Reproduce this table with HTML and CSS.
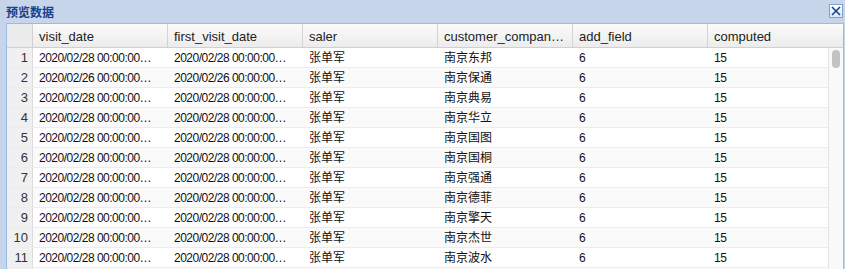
FILE: index.html
```html
<!DOCTYPE html>
<html lang="zh">
<head>
<meta charset="utf-8">
<title>预览数据</title>
<link rel="stylesheet" href="styles.css">
</head>
<body>
<div class="win">
  <div class="title">
    <span class="title-text">预览数据</span>
    <span class="close"><svg width="12" height="12" viewBox="0 0 12 12"><path d="M2 2 L10 10 M10 2 L2 10" stroke="#15428b" stroke-width="1.6" fill="none"/></svg></span>
  </div>
  <div class="grid">
    <div class="hdr">
      <div class="rn-h"></div>
      <div class="hc">visit_date</div>
      <div class="hc">first_visit_date</div>
      <div class="hc">saler</div>
      <div class="hc">customer_company_name</div>
      <div class="hc">add_field</div>
      <div class="hc">computed</div>
    </div>
    <div class="gbody">
      <div class="rows">
        <div class="row"><div class="rn">1</div><div class="c">2020/02/28 00:00:00.000</div><div class="c">2020/02/28 00:00:00.000</div><div class="c cjk">张单军</div><div class="c cjk">南京东邦</div><div class="c">6</div><div class="c last">15</div></div>
        <div class="row"><div class="rn">2</div><div class="c">2020/02/26 00:00:00.000</div><div class="c">2020/02/26 00:00:00.000</div><div class="c cjk">张单军</div><div class="c cjk">南京保通</div><div class="c">6</div><div class="c last">15</div></div>
        <div class="row"><div class="rn">3</div><div class="c">2020/02/28 00:00:00.000</div><div class="c">2020/02/28 00:00:00.000</div><div class="c cjk">张单军</div><div class="c cjk">南京典易</div><div class="c">6</div><div class="c last">15</div></div>
        <div class="row"><div class="rn">4</div><div class="c">2020/02/28 00:00:00.000</div><div class="c">2020/02/28 00:00:00.000</div><div class="c cjk">张单军</div><div class="c cjk">南京华立</div><div class="c">6</div><div class="c last">15</div></div>
        <div class="row"><div class="rn">5</div><div class="c">2020/02/28 00:00:00.000</div><div class="c">2020/02/28 00:00:00.000</div><div class="c cjk">张单军</div><div class="c cjk">南京国图</div><div class="c">6</div><div class="c last">15</div></div>
        <div class="row"><div class="rn">6</div><div class="c">2020/02/28 00:00:00.000</div><div class="c">2020/02/28 00:00:00.000</div><div class="c cjk">张单军</div><div class="c cjk">南京国桐</div><div class="c">6</div><div class="c last">15</div></div>
        <div class="row"><div class="rn">7</div><div class="c">2020/02/28 00:00:00.000</div><div class="c">2020/02/28 00:00:00.000</div><div class="c cjk">张单军</div><div class="c cjk">南京强通</div><div class="c">6</div><div class="c last">15</div></div>
        <div class="row"><div class="rn">8</div><div class="c">2020/02/28 00:00:00.000</div><div class="c">2020/02/28 00:00:00.000</div><div class="c cjk">张单军</div><div class="c cjk">南京德菲</div><div class="c">6</div><div class="c last">15</div></div>
        <div class="row"><div class="rn">9</div><div class="c">2020/02/28 00:00:00.000</div><div class="c">2020/02/28 00:00:00.000</div><div class="c cjk">张单军</div><div class="c cjk">南京擎天</div><div class="c">6</div><div class="c last">15</div></div>
        <div class="row"><div class="rn">10</div><div class="c">2020/02/28 00:00:00.000</div><div class="c">2020/02/28 00:00:00.000</div><div class="c cjk">张单军</div><div class="c cjk">南京杰世</div><div class="c">6</div><div class="c last">15</div></div>
        <div class="row"><div class="rn">11</div><div class="c">2020/02/28 00:00:00.000</div><div class="c">2020/02/28 00:00:00.000</div><div class="c cjk">张单军</div><div class="c cjk">南京波水</div><div class="c">6</div><div class="c last">15</div></div>
        <div class="row"><div class="rn">12</div><div class="c">2020/02/28 00:00:00.000</div><div class="c">2020/02/28 00:00:00.000</div><div class="c cjk">张单军</div><div class="c cjk">南京东邦</div><div class="c">6</div><div class="c last">15</div></div>
      </div>
      <div class="vscroll"><div class="thumb"></div></div>
    </div>
  </div>
</div>
</body>
</html>
```

FILE: styles.css
```css
html, body {
  margin: 0;
  padding: 0;
  height: 100%;
  overflow: hidden;
}
body {
  background: #c6d5e9;
  font-family: "Liberation Sans", Arial, "Noto Sans CJK SC", sans-serif;
}
.win {
  padding: 0 1px 0 6px;
  display: flex;
  flex-direction: column;
}
.title {
  height: 23px;
  display: flex;
  align-items: center;
  justify-content: space-between;
}
.title-text {
  font-size: 12px;
  font-weight: bold;
  color: #15428b;
  font-family: "Noto Sans CJK SC", sans-serif;
  margin-top: -1px;
}
.close {
  width: 12px;
  height: 12px;
  border: 1px solid #7ea1d1;
  background: linear-gradient(#ffffff, #dbe6f4);
  display: flex;
  align-items: center;
  justify-content: center;
  margin-top: -1px;
  margin-right: 1px;
}
.grid {
  border: 1px solid #99bbe8;
  background: #fff;
  display: flex;
  flex-direction: column;
  height: 260px;
  overflow: hidden;
}
.hdr {
  display: flex;
  height: 23px;
  border-bottom: 1px solid #d0d0d0;
  background: linear-gradient(#fbfbfb, #ececec);
}
.rn-h {
  width: 25px;
  border-right: 1px solid #d0d0d0;
  background: #ececec;
}
.hc {
  width: 122px;
  padding: 0 6px 0 6px;
  border-right: 1px solid #d3d3d3;
  font-size: 13px;
  line-height: 25px;
  color: #222;
  white-space: nowrap;
  overflow: hidden;
  text-overflow: ellipsis;
}
.hc:last-child {
  border-right: none;
  width: 123px;
}
.gbody {
  display: flex;
}
.rows {
  width: 821px;
}
.row {
  display: flex;
  height: 19px;
  border-bottom: 1px solid #ececec;
  background: #fff;
}
.row:nth-child(even) {
  background: #fafafa;
}
.rn {
  width: 21px;
  padding-right: 4px;
  border-right: 1px solid #dcdcdc;
  background: #f0f0f0;
  text-align: right;
  font-size: 13px;
  line-height: 20px;
  color: #333;
}
.c {
  width: 114px;
  padding: 0 15px 0 6px;
  font-size: 12px;
  letter-spacing: -0.5px;
  line-height: 20px;
  color: #111;
  white-space: nowrap;
  overflow: hidden;
  text-overflow: ellipsis;
}
.c.cjk {
  letter-spacing: 0;
}
.c.last {
  width: 99px;
}
.vscroll {
  width: 14px;
  border-left: 1px solid #e3e3e3;
  background: #f9f9f9;
  padding-top: 2px;
  display: flex;
  justify-content: center;
}
.thumb {
  width: 8px;
  height: 18px;
  border-radius: 4px;
  background: #c2c2c2;
}
```
